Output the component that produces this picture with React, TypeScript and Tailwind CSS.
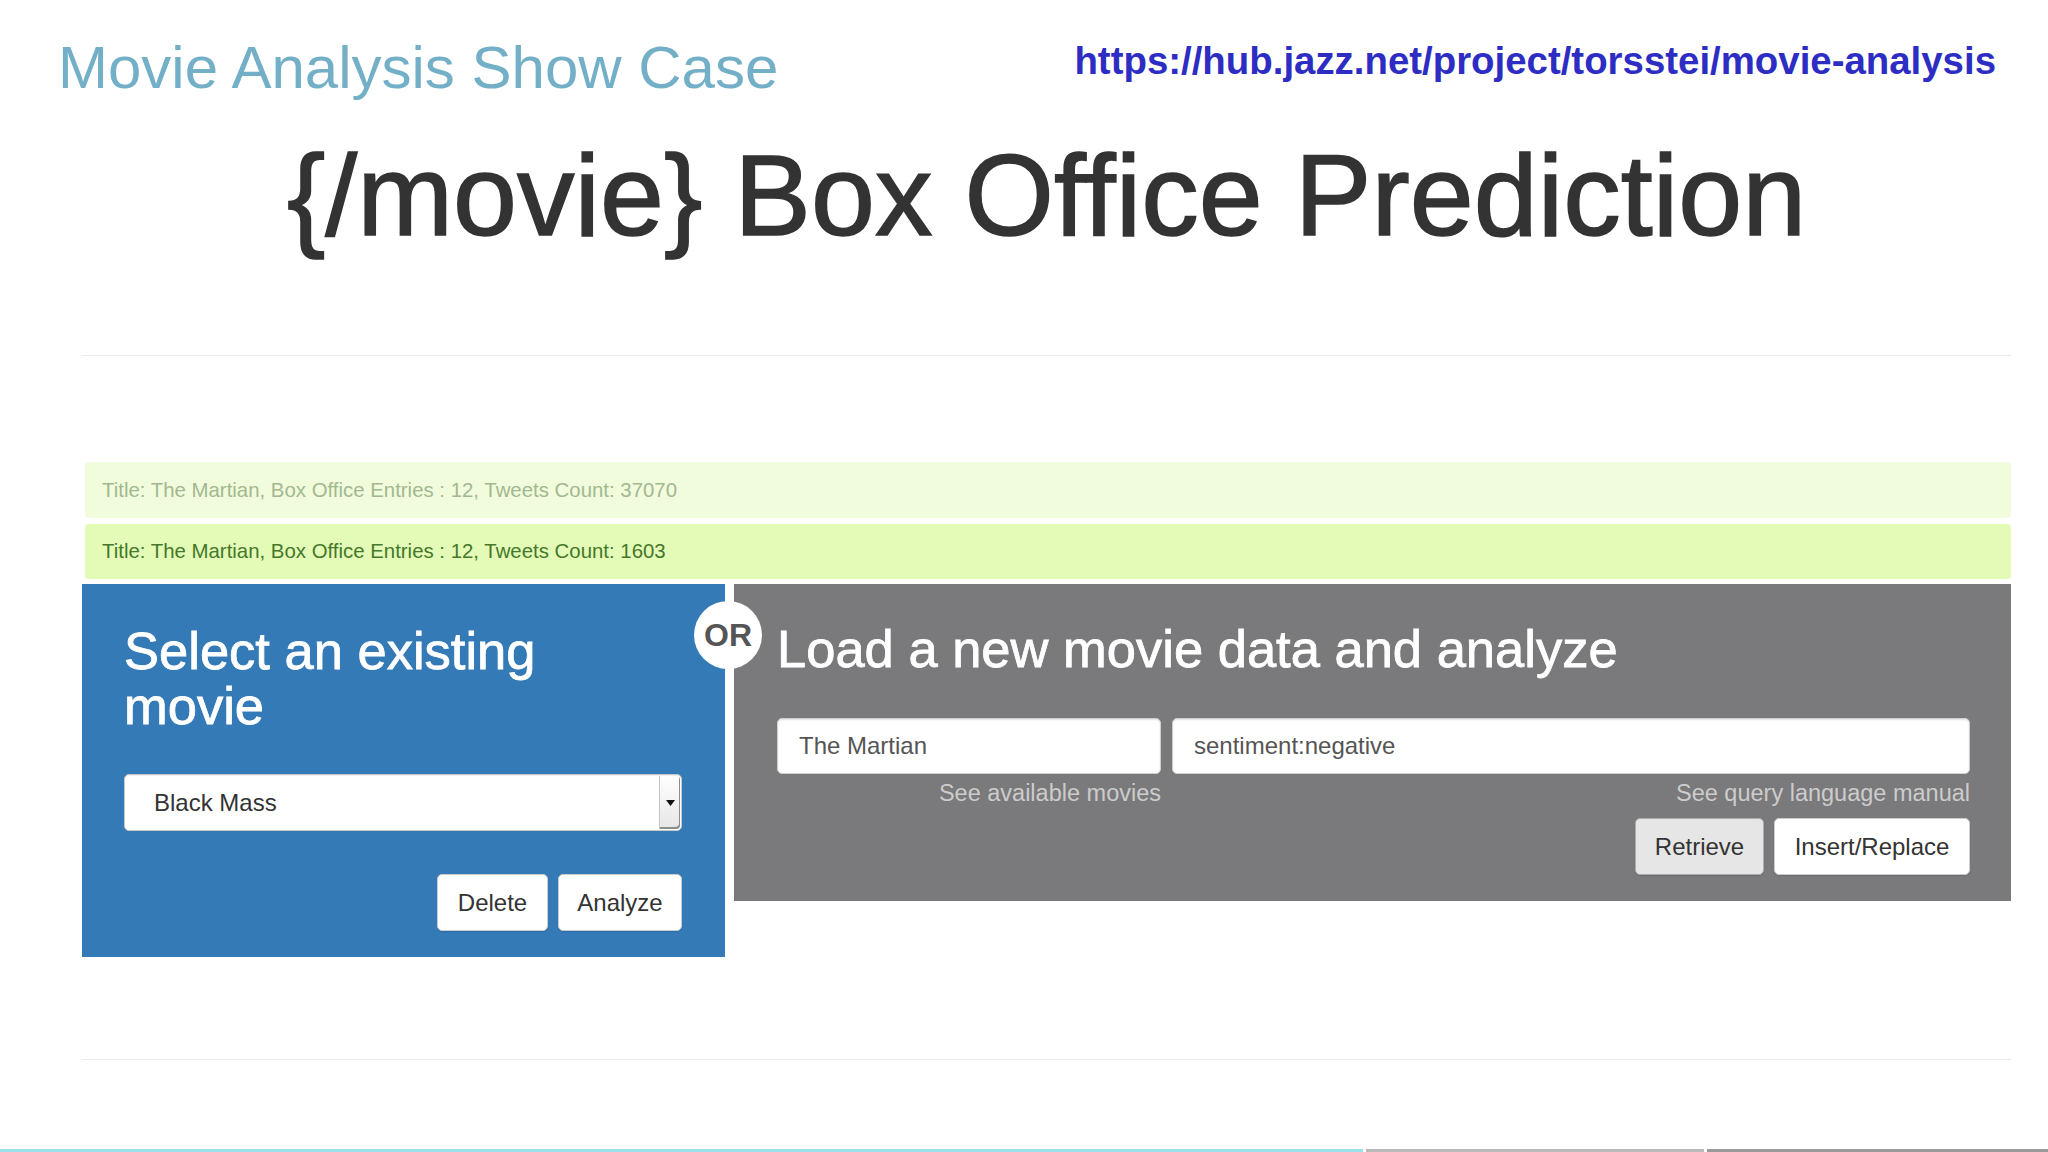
const alerts = [
  { text: "Title: The Martian, Box Office Entries : 12, Tweets Count: 37070", box: "bg-[#f0fcdc] text-[#a3b891] h-[56px]" },
  { text: "Title: The Martian, Box Office Entries : 12, Tweets Count: 1603", box: "bg-[#e3fbb7] text-[#45782a] h-[55px] mt-[6px]" },
];

const btn =
  "h-[57px] rounded-[5px] border text-[24px] text-[#333] flex items-center justify-center shadow-[0_1px_1px_rgba(0,0,0,0.12)]";

const field =
  "h-[56px] w-full rounded-[5px] border border-[#cfcfcf] bg-white px-[21px] text-[24px] text-[#555] outline-none shadow-[inset_0_1px_2px_rgba(0,0,0,0.12)]";

function MovieSelect() {
  return (
    <div className="relative mt-[41px] flex h-[57px] items-center rounded-[5px] border border-[#c9c9c9] bg-white pl-[29px] text-[24px] text-[#333] shadow-[inset_0_1px_1px_rgba(0,0,0,0.075)]">
      Black Mass
      <span className="absolute bottom-[1px] right-[1px] top-[1px] flex w-[21px] items-center justify-center rounded-r-[4px] border-l border-[#c4c4c4] bg-linear-to-b from-white to-[#e6e6e6] shadow-[inset_-1px_-2px_0_#8d8d8d]">
        <svg width="9" height="6" viewBox="0 0 9 6">
          <path d="M0 0h9L4.5 6z" fill="#111" />
        </svg>
      </span>
    </div>
  );
}

export default function App() {
  return (
    <div className="flex h-[1152px] w-full flex-col overflow-hidden bg-white font-['Liberation_Sans',Arial,sans-serif]">
      {/* top bar */}
      <header className="flex items-start justify-between pl-[58px] pr-[52px] pt-[35px]">
        <h2 className="text-[60px] leading-[66px] text-[#73b0c7]">Movie Analysis Show Case</h2>
        <a className="mt-[5px] text-[38.4px] font-bold leading-[42px] text-[#2d2dc4]">
          https://hub.jazz.net/project/torsstei/movie-analysis
        </a>
      </header>

      <div className="ml-[82px] w-[1929px]">
        <h1 className="mt-[31px] text-center text-[115px] leading-[126px] text-[#333] [-webkit-text-stroke:1.5px_#333]">
          {"{/movie} Box Office Prediction"}
        </h1>
        <hr className="mt-[97px] border-[#ebebeb]" />

        <div className="mt-[106px] ml-[3px]">
          {alerts.map((a) => (
            <div key={a.text} className={`flex items-center rounded-[4px] px-[17px] text-[20.4px] ${a.box}`}>
              {a.text}
            </div>
          ))}
        </div>

        <div className="relative mt-[5px] flex items-start gap-[9px]">
          {/* existing movie */}
          <section className="h-[373px] w-[643px] shrink-0 bg-[#337ab7] pl-[42px] pr-[43px] pt-[39px]">
            <h3 className="w-[460px] text-[52.5px] leading-[55px] text-white [-webkit-text-stroke:0.8px_white]">
              Select an existing movie
            </h3>
            <MovieSelect />
            <div className="mt-[43px] flex justify-end gap-[10px]">
              <button className={`${btn} w-[111px] border-[#cccccc] bg-white`}>Delete</button>
              <button className={`${btn} w-[124px] border-[#cccccc] bg-white`}>Analyze</button>
            </div>
          </section>

          {/* new movie */}
          <section className="h-[317px] flex-1 bg-[#7a797b] pl-[43px] pr-[41px] pt-[37px]">
            <h3 className="text-[52.5px] leading-[55px] text-white [-webkit-text-stroke:0.8px_white]">
              Load a new movie data and analyze
            </h3>
            <div className="mt-[42px] flex gap-[11px]">
              <div className="flex w-[384px] shrink-0 flex-col items-end">
                <input readOnly defaultValue="The Martian" className={field} />
                <span className="mt-[5px] text-[23.5px] leading-[28px] text-[#cccccc]">See available movies</span>
              </div>
              <div className="flex flex-1 flex-col items-end">
                <input readOnly defaultValue="sentiment:negative" className={field} />
                <span className="mt-[5px] text-[23.5px] leading-[28px] text-[#cccccc]">See query language manual</span>
              </div>
            </div>
            <div className="mt-[11px] flex justify-end gap-[10px]">
              <button className={`${btn} w-[129px] border-[#adadad] bg-[#e6e6e6]`}>Retrieve</button>
              <button className={`${btn} w-[196px] border-[#cccccc] bg-white`}>Insert/Replace</button>
            </div>
          </section>

          <div className="absolute left-[612px] top-[17px] flex h-[68px] w-[68px] items-center justify-center rounded-full bg-white text-[32px] font-bold text-[#555]">
            OR
          </div>
        </div>

        <hr className="mt-[102px] border-[#ebebeb]" />
      </div>

      {/* player progress */}
      <div className="mt-auto flex h-[3px] gap-[3px]">
        <div className="w-[1363px] bg-[#9adfe9]" />
        <div className="w-[338px] bg-[#b9b9b9]" />
        <div className="flex-1 bg-[#9a9a9a]" />
      </div>
    </div>
  );
}
